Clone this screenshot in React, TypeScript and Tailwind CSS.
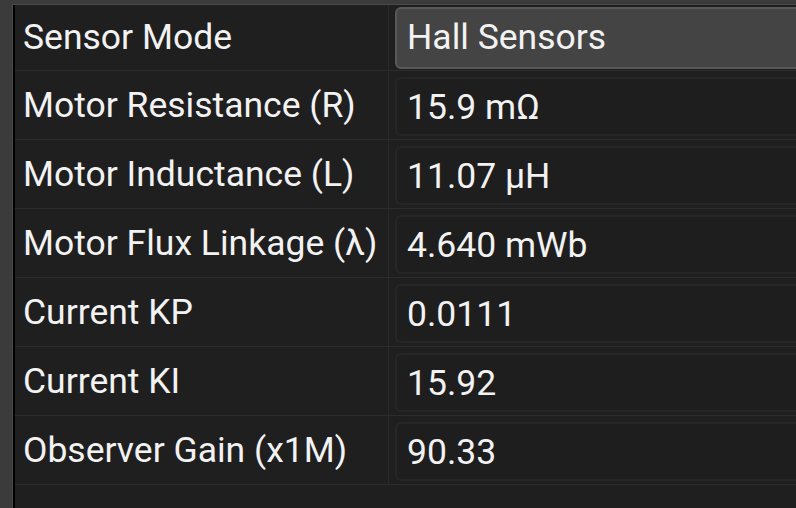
const ROWS: { label: string; value: string }[] = [
  { label: 'Motor Resistance (R)', value: '15.9 mΩ' },
  { label: 'Motor Inductance (L)', value: '11.07 µH' },
  { label: 'Motor Flux Linkage (λ)', value: '4.640 mWb' },
  { label: 'Current KP', value: '0.0111' },
  { label: 'Current KI', value: '15.92' },
  { label: 'Observer Gain (x1M)', value: '90.33' },
]

export default function App() {
  return (
    <div
      className="w-[796px] h-[508px] overflow-hidden bg-[#3b3b3b] pl-[12px] pt-[4px] text-[#f2f2f2]"
      style={{ fontFamily: 'Roboto, "Noto Sans", sans-serif' }}
    >
      <div className="h-full border-l border-t border-[#4a4a4a]">
        <div className="h-full border-l-2 border-black bg-[#1f1f1f] flex flex-col">

          {/* Sensor mode combo row */}
          <div className="flex h-[66px] border-b border-[#2c2c2c] shrink-0">
            <div className="w-[374px] shrink-0 border-r border-[#2a2a2a] flex items-center pl-[8px] text-[35.5px] leading-none whitespace-nowrap">
              Sensor Mode
            </div>
            <div className="flex-1 pl-[6px] pt-[2px] pb-[1px] -mr-[12px]">
              <div className="h-full rounded-[6px] border-2 border-[#585858] bg-[#444444] flex items-center pl-[10px] text-[35.5px] leading-none">
                Hall Sensors
              </div>
            </div>
          </div>

          {ROWS.map(row => (
            <div key={row.label} className="flex h-[69px] border-b border-[#2c2c2c] shrink-0">
              <div className="w-[374px] shrink-0 border-r border-[#2a2a2a] flex items-center pl-[8px] pt-[1px] text-[35.5px] leading-none whitespace-nowrap">
                {row.label}
              </div>
              <div className="flex-1 pl-[6px] pt-[6px] pb-[3px] -mr-[12px]">
                <div className="h-full rounded-[6px] border-2 border-[#262626] bg-[#1e1e1e] flex items-center pl-[10px] pt-[2px] text-[35.5px] leading-none">
                  {row.value}
                </div>
              </div>
            </div>
          ))}

          <div className="flex-1" />
        </div>
      </div>
    </div>
  )
}
